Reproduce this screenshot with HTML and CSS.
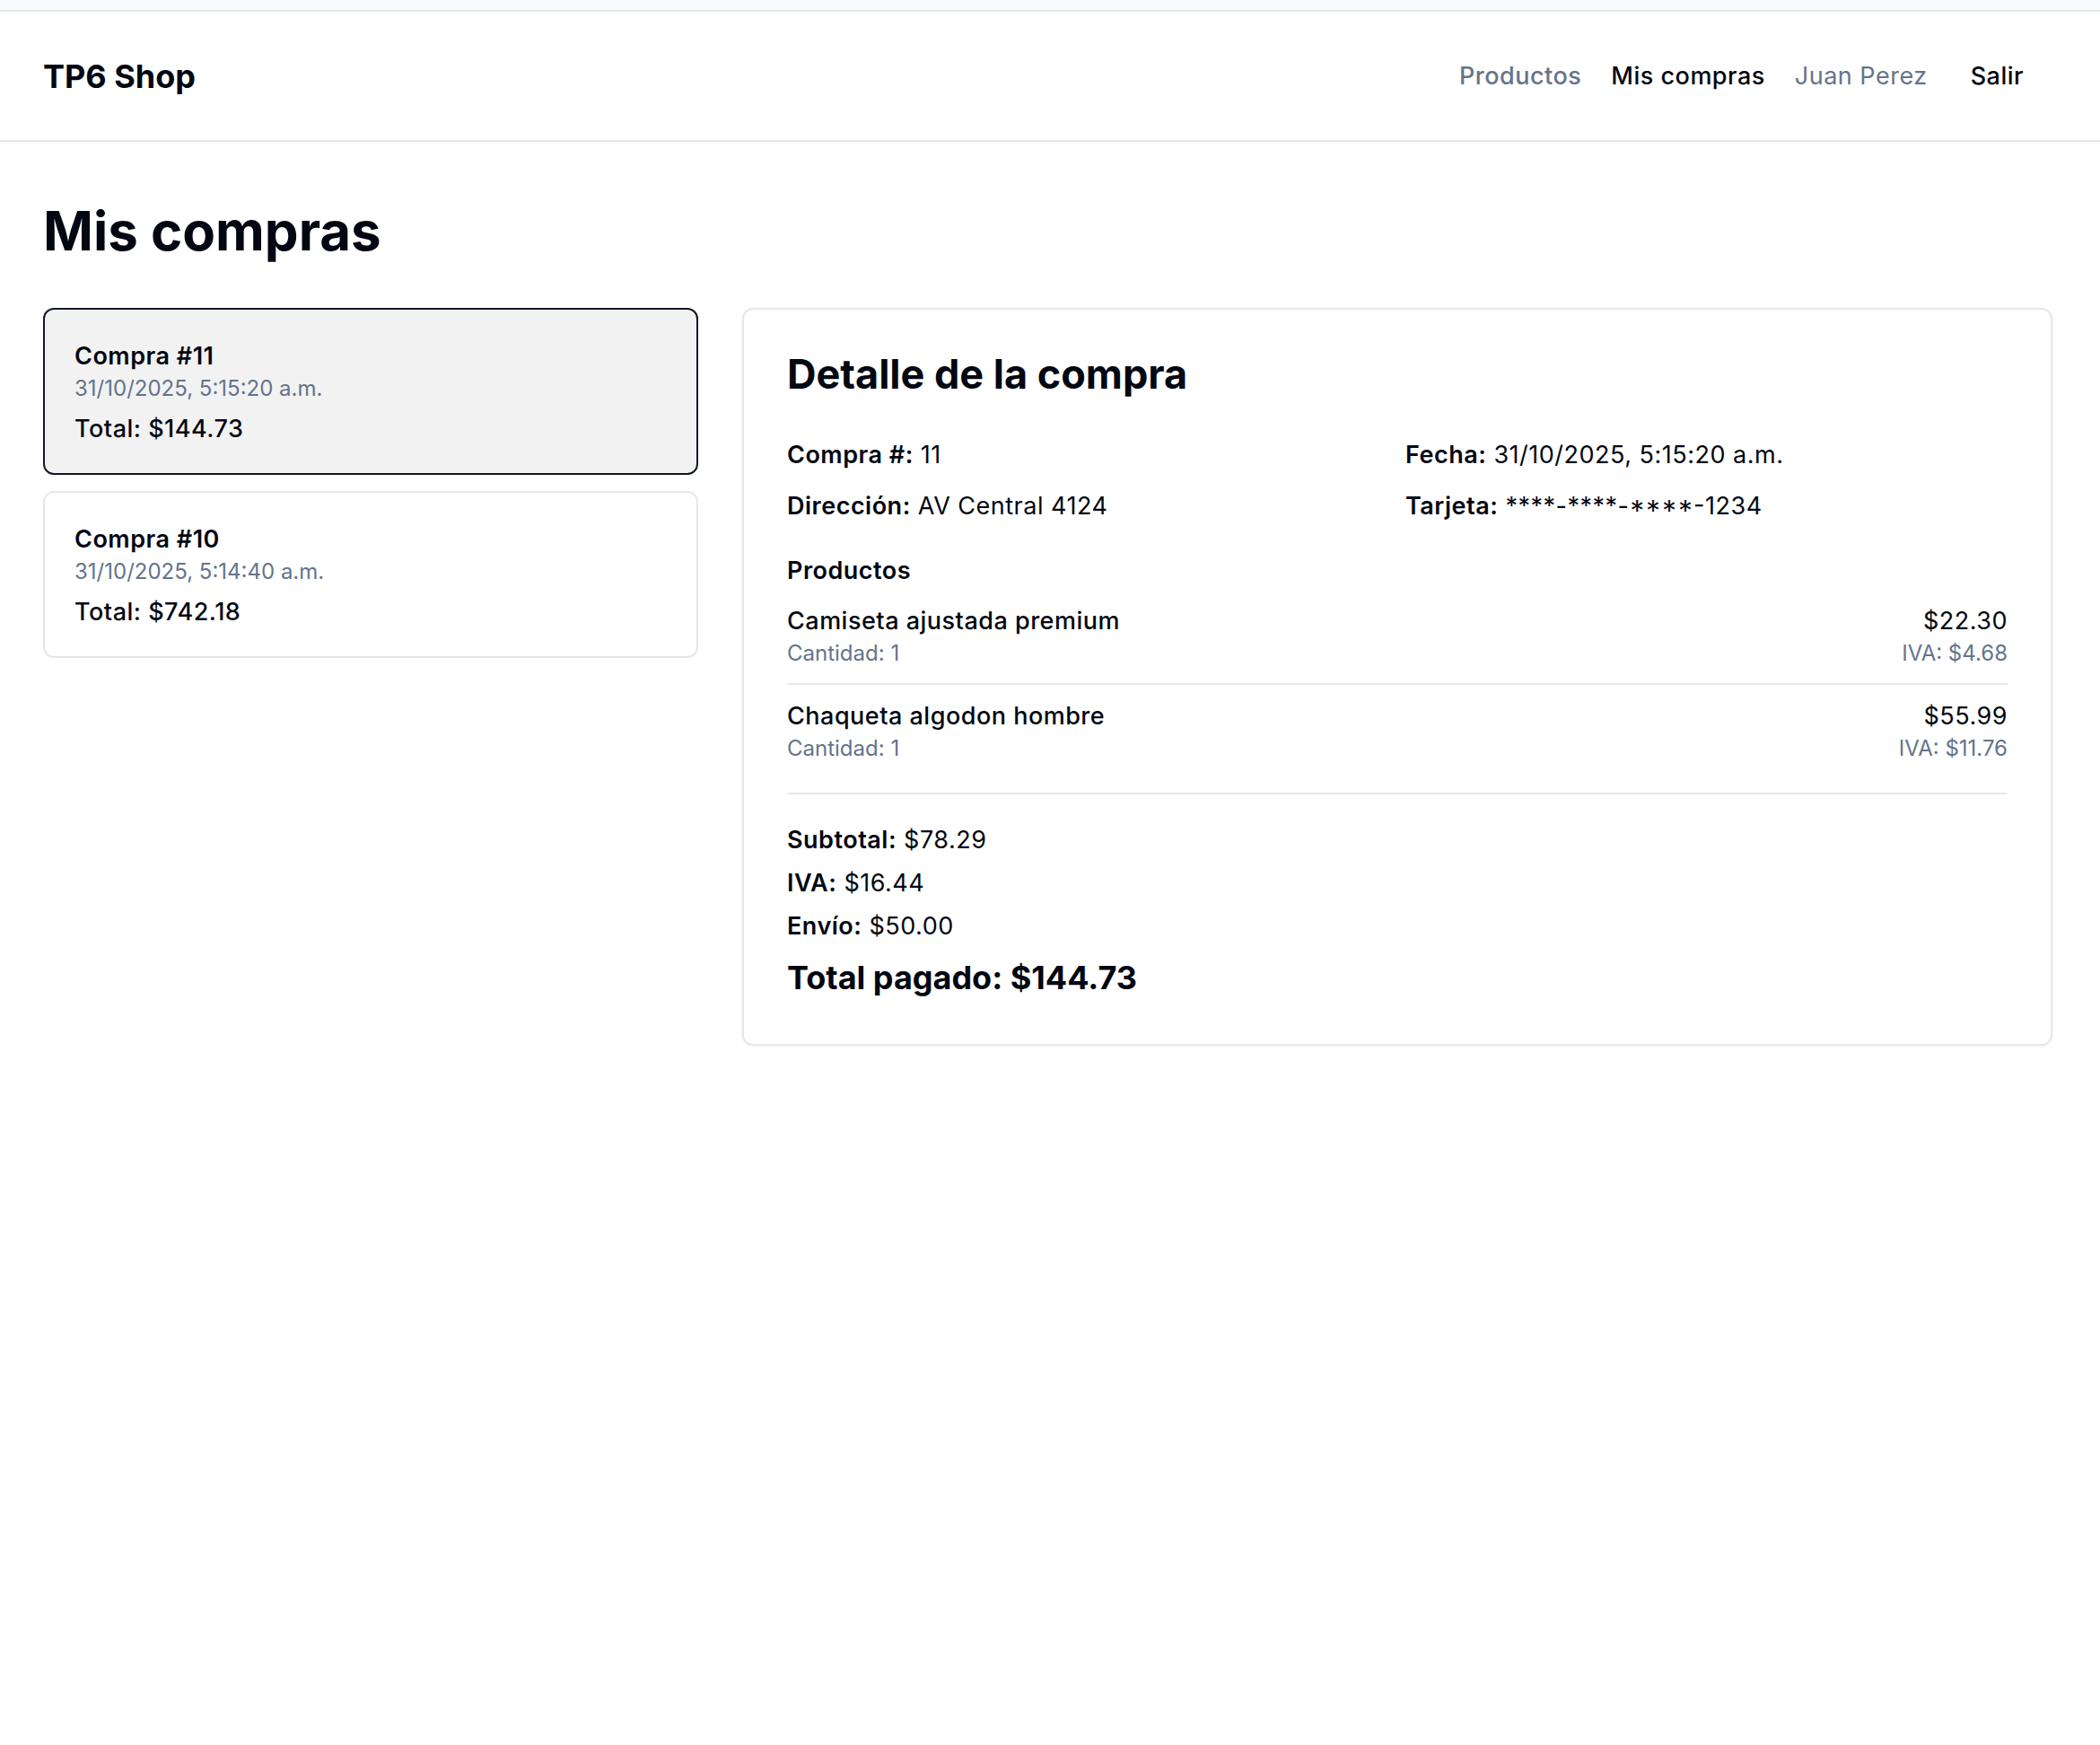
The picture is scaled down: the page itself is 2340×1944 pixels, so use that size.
FILE: index.html
```html
<!DOCTYPE html>
<html lang="es">
<head>
<meta charset="utf-8">
<title>Mis compras - TP6 Shop</title>
<link rel="stylesheet" href="styles.css">
</head>
<body>
<div class="topbar"></div>
<header class="site-header">
  <a class="brand" href="#">TP6 Shop</a>
  <nav class="nav">
    <a class="nav-link" href="#">Productos</a>
    <a class="nav-link nav-link--active" href="#">Mis compras</a>
    <span class="nav-user">Juan Perez</span>
    <button class="btn-logout" type="button">Salir</button>
  </nav>
</header>

<main class="page">
  <h1 class="page-title">Mis compras</h1>
  <div class="layout">
    <div class="orders">
      <button class="order-card order-card--selected" type="button">
        <span class="order-title">Compra #11</span>
        <span class="order-date">31/10/2025, 5:15:20 a.m.</span>
        <span class="order-total">Total: $144.73</span>
      </button>
      <button class="order-card" type="button">
        <span class="order-title">Compra #10</span>
        <span class="order-date">31/10/2025, 5:14:40 a.m.</span>
        <span class="order-total">Total: $742.18</span>
      </button>
    </div>

    <section class="detail">
      <h2 class="detail-title">Detalle de la compra</h2>
      <div class="info-grid">
        <p class="info"><strong>Compra #:</strong> 11</p>
        <p class="info"><strong>Fecha:</strong> 31/10/2025, 5:15:20 a.m.</p>
        <p class="info"><strong>Dirección:</strong> AV Central 4124</p>
        <p class="info"><strong>Tarjeta:</strong> ****-****-<span class="card-tail">****-1234</span></p>
      </div>

      <h3 class="section-title">Productos</h3>
      <ul class="items">
        <li class="item">
          <div class="item-main">
            <span class="item-name">Camiseta ajustada premium</span>
            <span class="item-sub">Cantidad: 1</span>
          </div>
          <div class="item-side">
            <span class="item-price">$22.30</span>
            <span class="item-sub">IVA: $4.68</span>
          </div>
        </li>
        <li class="item">
          <div class="item-main">
            <span class="item-name">Chaqueta algodon hombre</span>
            <span class="item-sub">Cantidad: 1</span>
          </div>
          <div class="item-side">
            <span class="item-price">$55.99</span>
            <span class="item-sub">IVA: $11.76</span>
          </div>
        </li>
      </ul>

      <div class="totals">
        <p class="total-line"><strong>Subtotal:</strong> $78.29</p>
        <p class="total-line"><strong>IVA:</strong> $16.44</p>
        <p class="total-line"><strong>Envío:</strong> $50.00</p>
        <p class="grand-total">Total pagado: $144.73</p>
      </div>
    </section>
  </div>
</main>
</body>
</html>
```

FILE: styles.css
```css
* {
  box-sizing: border-box;
}

html, body {
  margin: 0;
  padding: 0;
  background: #ffffff;
}

body {
  font-family: Inter, "Noto Sans", "Liberation Sans", sans-serif;
  color: #030712;
  font-size: 24px;
  line-height: 36px;
}

.topbar {
  height: 13px;
  background: #f9fafb;
  border-bottom: 2px solid #e5e7eb;
}

.site-header {
  height: 145px;
  display: flex;
  align-items: center;
  justify-content: space-between;
  padding: 0 70px 0 48px;
  border-bottom: 2px solid #e5e7eb;
}

.brand {
  font-size: 36px;
  line-height: 48px;
  font-weight: 700;
  color: #030712;
  text-decoration: none;
}

.nav {
  display: flex;
  align-items: center;
  gap: 33px;
}

.nav-link,
.nav-user,
.btn-logout {
  font-family: inherit;
  font-size: 27px;
  line-height: 42px;
  letter-spacing: 0.5px;
}

.nav-link {
  font-weight: 500;
  color: #64748b;
  text-decoration: none;
}

.nav-link--active {
  color: #030712;
}

.nav-user {
  font-weight: 400;
  color: #64748b;
}

.btn-logout {
  font-weight: 500;
  color: #030712;
  background: transparent;
  border: 0;
  padding: 9px 15px;
  cursor: pointer;
}

.page {
  padding: 69px 53px 48px 48px;
}

.page-title {
  margin: 0 0 56px;
  font-size: 60px;
  line-height: 60px;
  font-weight: 700;
}

.layout {
  display: grid;
  grid-template-columns: 1fr 2fr;
  gap: 49px;
  align-items: start;
}

.orders {
  display: flex;
  flex-direction: column;
  gap: 18px;
}

.order-card {
  display: flex;
  flex-direction: column;
  align-items: flex-start;
  text-align: left;
  width: 100%;
  font-family: inherit;
  color: inherit;
  background: #ffffff;
  border: 2px solid #e5e7eb;
  border-radius: 12px;
  padding: 31px 33px 28px;
  cursor: pointer;
}

.order-card--selected {
  background: #f2f2f2;
  border-color: #111827;
}

.order-title {
  font-size: 27px;
  line-height: 42px;
  font-weight: 600;
  letter-spacing: 0.5px;
}

.order-date {
  font-size: 24px;
  line-height: 30px;
  color: #64748b;
}

.order-total {
  margin-top: 9px;
  font-size: 27px;
  line-height: 42px;
  font-weight: 500;
  letter-spacing: 0.5px;
}

.detail {
  border: 2px solid #e5e7eb;
  border-radius: 12px;
  padding: 45px 48px 50px;
  background: #ffffff;
  box-shadow: 0 1px 3px rgba(0, 0, 0, 0.06);
}

.detail-title {
  margin: 0 0 42px;
  font-size: 45px;
  line-height: 54px;
  font-weight: 700;
}

.info-grid {
  display: grid;
  grid-template-columns: 1fr 1fr;
  column-gap: 18px;
  row-gap: 15px;
}

.info {
  margin: 0;
  font-size: 27px;
  line-height: 42px;
  letter-spacing: 0.5px;
}

.card-tail {
  font-feature-settings: "case" 1;
}

.info strong,
.total-line strong {
  font-weight: 600;
}

.section-title {
  margin: 30px 0 0;
  font-size: 27px;
  line-height: 42px;
  font-weight: 600;
  letter-spacing: 0.5px;
}

.items {
  list-style: none;
  margin: 0;
  padding: 0;
}

.item {
  display: flex;
  justify-content: space-between;
  align-items: flex-start;
  padding: 14px 0 18px;
  border-bottom: 2px solid #e5e7eb;
}

.item:last-child {
  border-bottom: 0;
}

.item-main,
.item-side {
  display: flex;
  flex-direction: column;
}

.item-side {
  align-items: flex-end;
}

.item-name,
.item-price {
  font-size: 27px;
  line-height: 42px;
  letter-spacing: 0.5px;
}

.item-name {
  font-weight: 500;
}

.item-sub {
  font-size: 24px;
  line-height: 30px;
  color: #64748b;
}

.totals {
  margin-top: 16px;
  padding-top: 30px;
  border-top: 2px solid #e5e7eb;
  display: flex;
  flex-direction: column;
  gap: 6px;
}

.total-line {
  margin: 0;
  font-size: 27px;
  line-height: 42px;
  letter-spacing: 0.5px;
}

.grand-total {
  margin: 6px 0 0;
  font-size: 36px;
  line-height: 48px;
  font-weight: 700;
}
```
